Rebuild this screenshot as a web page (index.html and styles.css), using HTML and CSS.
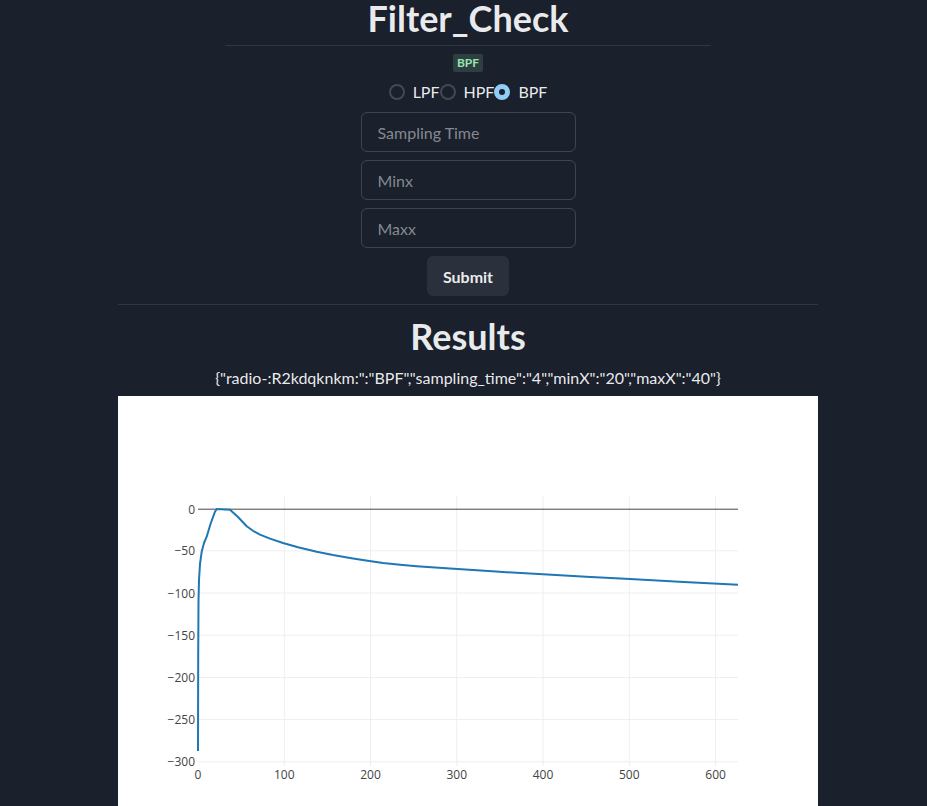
FILE: index.html
```html
<!DOCTYPE html>
<html lang="en">
<head>
<meta charset="utf-8">
<title>Filter_Check</title>
<link rel="stylesheet" href="styles.css">
</head>
<body>
<main class="page">
  <h1 class="heading main-heading">Filter_Check</h1>
  <hr class="divider divider-short">
  <span class="badge">BPF</span>
  <div class="radio-group">
    <label class="radio"><input type="radio" name="filter" value="LPF"><span class="radio-ctrl"></span><span class="radio-label">LPF</span></label>
    <label class="radio"><input type="radio" name="filter" value="HPF"><span class="radio-ctrl"></span><span class="radio-label">HPF</span></label>
    <label class="radio"><input type="radio" name="filter" value="BPF" checked><span class="radio-ctrl"></span><span class="radio-label">BPF</span></label>
  </div>
  <form class="form">
    <input class="field" type="text" placeholder="Sampling Time">
    <input class="field" type="text" placeholder="Minx">
    <input class="field" type="text" placeholder="Maxx">
    <button class="submit" type="button">Submit</button>
  </form>
  <hr class="divider divider-wide">
  <h2 class="heading results-heading">Results</h2>
  <p class="json">{"radio-:R2kdqknkm:":"BPF","sampling_time":"4","minX":"20","maxX":"40"}</p>
  <div class="plot">
    <svg class="plot-svg" width="700" height="450" viewBox="0 0 700 450">
      <rect x="0" y="0" width="700" height="450" fill="#fff"/>
      <g class="grid" stroke="#eee" stroke-width="1">
        <line x1="166.3" y1="100" x2="166.3" y2="370"/>
        <line x1="252.5" y1="100" x2="252.5" y2="370"/>
        <line x1="338.8" y1="100" x2="338.8" y2="370"/>
        <line x1="425" y1="100" x2="425" y2="370"/>
        <line x1="511.3" y1="100" x2="511.3" y2="370"/>
        <line x1="597.6" y1="100" x2="597.6" y2="370"/>
        <line x1="80" y1="154.8" x2="620" y2="154.8"/>
        <line x1="80" y1="197" x2="620" y2="197"/>
        <line x1="80" y1="239.2" x2="620" y2="239.2"/>
        <line x1="80" y1="281.4" x2="620" y2="281.4"/>
        <line x1="80" y1="323.6" x2="620" y2="323.6"/>
        <line x1="80" y1="365.8" x2="620" y2="365.8"/>
      </g>
      <line x1="80" y1="113.2" x2="620" y2="113.2" stroke="#444" stroke-width="1"/>
      <polyline fill="none" stroke="#1f77b4" stroke-width="2" stroke-linejoin="round"
        points="80,355 80.2,260 80.5,205 81,184 82,168 83.7,155.7 86,147 88.7,140.7 92.5,128 97,115.7 98.7,113 112,113.8 120,121 128.7,130.2 135,134.8 142,138.6 152,142.6 165,147 180,151.3 198.7,155.7 215,159 232,162 248,164.6 265,167 282,168.7 298.7,170.2 332,172.6 378,175.6 425,178.3 468,180.7 512,183 566,186 620,188.7"/>
      <g class="ticks" font-family="'Open Sans', sans-serif" font-size="12" fill="#444">
        <text x="77" y="117.7" text-anchor="end">0</text>
        <text x="77" y="159.3" text-anchor="end">−50</text>
        <text x="77" y="201.5" text-anchor="end">−100</text>
        <text x="77" y="243.7" text-anchor="end">−150</text>
        <text x="77" y="285.9" text-anchor="end">−200</text>
        <text x="77" y="328.1" text-anchor="end">−250</text>
        <text x="77" y="370.3" text-anchor="end">−300</text>
        <text x="80" y="382.5" text-anchor="middle">0</text>
        <text x="166.3" y="382.5" text-anchor="middle">100</text>
        <text x="252.5" y="382.5" text-anchor="middle">200</text>
        <text x="338.8" y="382.5" text-anchor="middle">300</text>
        <text x="425" y="382.5" text-anchor="middle">400</text>
        <text x="511.3" y="382.5" text-anchor="middle">500</text>
        <text x="597.6" y="382.5" text-anchor="middle">600</text>
      </g>
    </svg>
  </div>
</main>
</body>
</html>
```
FILE: styles.css
```css
html {
  overflow: hidden;
}
body {
  margin: 0;
  background: #1a202c;
  color: rgba(255, 255, 255, 0.92);
  font-family: Lato, "Open Sans", sans-serif;
  font-size: 16px;
  line-height: 1.5;
}
.page {
  display: flex;
  flex-direction: column;
  align-items: center;
  padding-left: 9px;
}
.heading {
  margin: 0;
  font-size: 36px;
  font-weight: 700;
  line-height: 43px;
}
.main-heading {
  line-height: 36px;
}
.divider {
  margin: 0;
  border: 0;
  border-top: 1px solid rgba(255, 255, 255, 0.1);
  height: 0;
}
.divider-short {
  width: 486px;
  margin-top: 9px;
}
.divider-wide {
  width: 700px;
  margin-top: 8px;
}
.badge {
  margin-top: 8px;
  display: inline-block;
  padding: 0 4px;
  border-radius: 2px;
  background: rgba(154, 230, 180, 0.16);
  color: #9ae6b4;
  font-size: 12px;
  font-weight: 700;
  line-height: 18px;
  text-transform: uppercase;
}
.radio-group {
  margin-top: 8px;
  display: flex;
  align-items: center;
}
.radio {
  display: inline-flex;
  align-items: center;
  cursor: pointer;
}
.radio input {
  position: absolute;
  opacity: 0;
  width: 1px;
  height: 1px;
}
.radio-ctrl {
  box-sizing: border-box;
  width: 16px;
  height: 16px;
  border: 2px solid rgba(255, 255, 255, 0.18);
  border-radius: 50%;
  display: inline-flex;
  align-items: center;
  justify-content: center;
}
.radio input:checked + .radio-ctrl {
  background: #90cdf4;
  border-color: #90cdf4;
}
.radio input:checked + .radio-ctrl::before {
  content: "";
  width: 6px;
  height: 6px;
  border-radius: 50%;
  background: #1a202c;
}
.radio-label {
  margin-left: 8px;
}
.form {
  margin-top: 8px;
  display: flex;
  flex-direction: column;
  align-items: center;
  gap: 8px;
}
.field {
  box-sizing: border-box;
  width: 215px;
  height: 40px;
  padding: 0 16px;
  border: 1px solid rgba(255, 255, 255, 0.16);
  border-radius: 6px;
  background: transparent;
  color: rgba(255, 255, 255, 0.92);
  font-family: inherit;
  font-size: 16px;
  outline: none;
}
.field::placeholder {
  color: rgba(255, 255, 255, 0.48);
}
.submit {
  height: 40px;
  padding: 0 16px;
  border: 0;
  border-radius: 6px;
  background: rgba(255, 255, 255, 0.08);
  color: rgba(255, 255, 255, 0.92);
  font-family: inherit;
  font-size: 16px;
  font-weight: 700;
  cursor: pointer;
}
.results-heading {
  margin-top: 10px;
}
.json {
  margin: 8px 0 0;
  line-height: 24px;
}
.plot {
  margin-top: 6px;
  width: 700px;
  background: #fff;
}
.plot-svg {
  display: block;
}
```
